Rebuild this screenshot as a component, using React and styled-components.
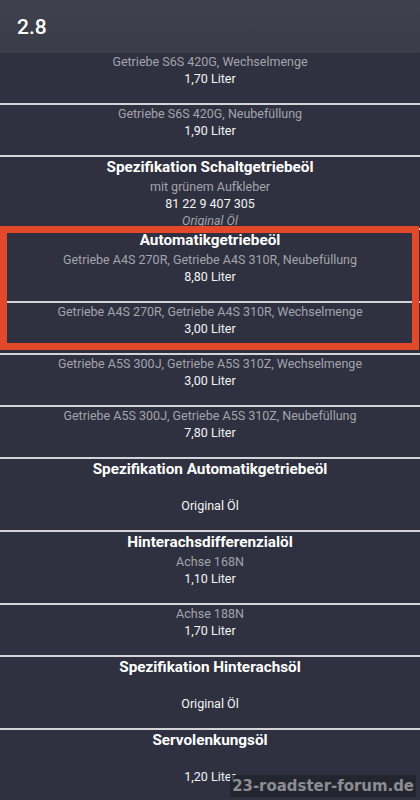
import React from 'react'
import styled, { createGlobalStyle } from 'styled-components'

const GlobalStyle = createGlobalStyle`
    html, body {
        margin: 0;
        padding: 0;
        background: #2f3040;
        font-family: Roboto, "Noto Sans", sans-serif;
    }
    body {
        height: 800px;
        overflow: hidden;
    }
`;

const sections = [
    {
        entries: [
            { label: 'Getriebe S6S 420G, Wechselmenge', value: '1,70 Liter' },
            { label: 'Getriebe S6S 420G, Neubefüllung', value: '1,90 Liter' },
        ],
    },
    {
        title: 'Spezifikation Schaltgetriebeöl',
        entries: [
            { label: 'mit grünem Aufkleber', value: '81 22 9 407 305', note: 'Original Öl' },
        ],
    },
    {
        title: 'Automatikgetriebeöl',
        highlight: true,
        entries: [
            { label: 'Getriebe A4S 270R, Getriebe A4S 310R, Neubefüllung', value: '8,80 Liter' },
            { label: 'Getriebe A4S 270R, Getriebe A4S 310R, Wechselmenge', value: '3,00 Liter' },
        ],
    },
    {
        entries: [
            { label: 'Getriebe A5S 300J, Getriebe A5S 310Z, Wechselmenge', value: '3,00 Liter' },
            { label: 'Getriebe A5S 300J, Getriebe A5S 310Z, Neubefüllung', value: '7,80 Liter' },
        ],
    },
    {
        title: 'Spezifikation Automatikgetriebeöl',
        entries: [{ label: '', value: 'Original Öl' }],
    },
    {
        title: 'Hinterachsdifferenzialöl',
        entries: [
            { label: 'Achse 168N', value: '1,10 Liter' },
            { label: 'Achse 188N', value: '1,70 Liter' },
        ],
    },
    {
        title: 'Spezifikation Hinterachsöl',
        entries: [{ label: '', value: 'Original Öl' }],
    },
    {
        title: 'Servolenkungsöl',
        entries: [{ label: '', value: '1,20 Liter' }],
    },
];

const App = () => {
    return (
        <Page>
            <GlobalStyle />
            <TopBar>
                <Title>2.8</Title>
            </TopBar>
            <List>
                {sections.map((section, si) => (
                    <Section key={si}>
                        {si > 0 && <Divider />}
                        <Group>
                            {section.title && <SectionTitle>{section.title}</SectionTitle>}
                            {section.entries.map((entry, ei) => (
                                <React.Fragment key={ei}>
                                    {ei > 0 && <Divider />}
                                    <Entry>
                                        <Label>{entry.label}</Label>
                                        <Value>{entry.value}</Value>
                                        <Note>{entry.note}</Note>
                                    </Entry>
                                </React.Fragment>
                            ))}
                            {section.highlight && <Highlight />}
                        </Group>
                    </Section>
                ))}
            </List>
            <Watermark>23-roadster-forum.de</Watermark>
        </Page>
    )
}

const Page = styled.div`
    position: relative;
    width: 420px;
    height: 800px;
    overflow: hidden;
    background: #2f3040;
`;

const TopBar = styled.header`
    height: 53px;
    display: flex;
    align-items: center;
    padding-left: 17px;
    background: linear-gradient(#3f414d, #3a3c48);
`;

const Title = styled.h1`
    margin: 0;
    font-size: 21px;
    font-weight: 500;
    color: #ffffff;
`;

const List = styled.div`
    display: flex;
    flex-direction: column;
`;

const Section = styled.section`
    display: flex;
    flex-direction: column;
`;

const Group = styled.div`
    position: relative;
    display: flex;
    flex-direction: column;
`;

const Divider = styled.div`
    height: 2px;
    background: #d4d4d8;
`;

const SectionTitle = styled.h2`
    margin: 0;
    height: 21px;
    line-height: 21px;
    font-size: 15.3px;
    font-weight: 700;
    color: #ffffff;
    text-align: center;
`;

const Entry = styled.div`
    display: flex;
    flex-direction: column;
    align-items: center;
    font-size: 12.5px;
    line-height: 17px;
`;

const Label = styled.div`
    height: 17px;
    color: #a4a4ac;
`;

const Value = styled.div`
    height: 17px;
    color: #f4f4f4;
`;

const Note = styled.div`
    height: 16px;
    color: #a4a4ac;
    font-style: italic;
`;

const Highlight = styled.div`
    position: absolute;
    top: -4px;
    bottom: 3px;
    left: 0;
    right: 1px;
    border: 7px solid #e4482b;
    pointer-events: none;
`;

const Watermark = styled.div`
    position: absolute;
    right: 4px;
    bottom: 3px;
    padding: 0 2px;
    background: rgba(32, 33, 42, 0.75);
    color: #8c8c92;
    font-family: "DejaVu Sans Condensed", "DejaVu Sans", sans-serif;
    font-stretch: condensed;
    font-weight: 700;
    font-size: 16.6px;
    line-height: 22px;
`;

export default App
